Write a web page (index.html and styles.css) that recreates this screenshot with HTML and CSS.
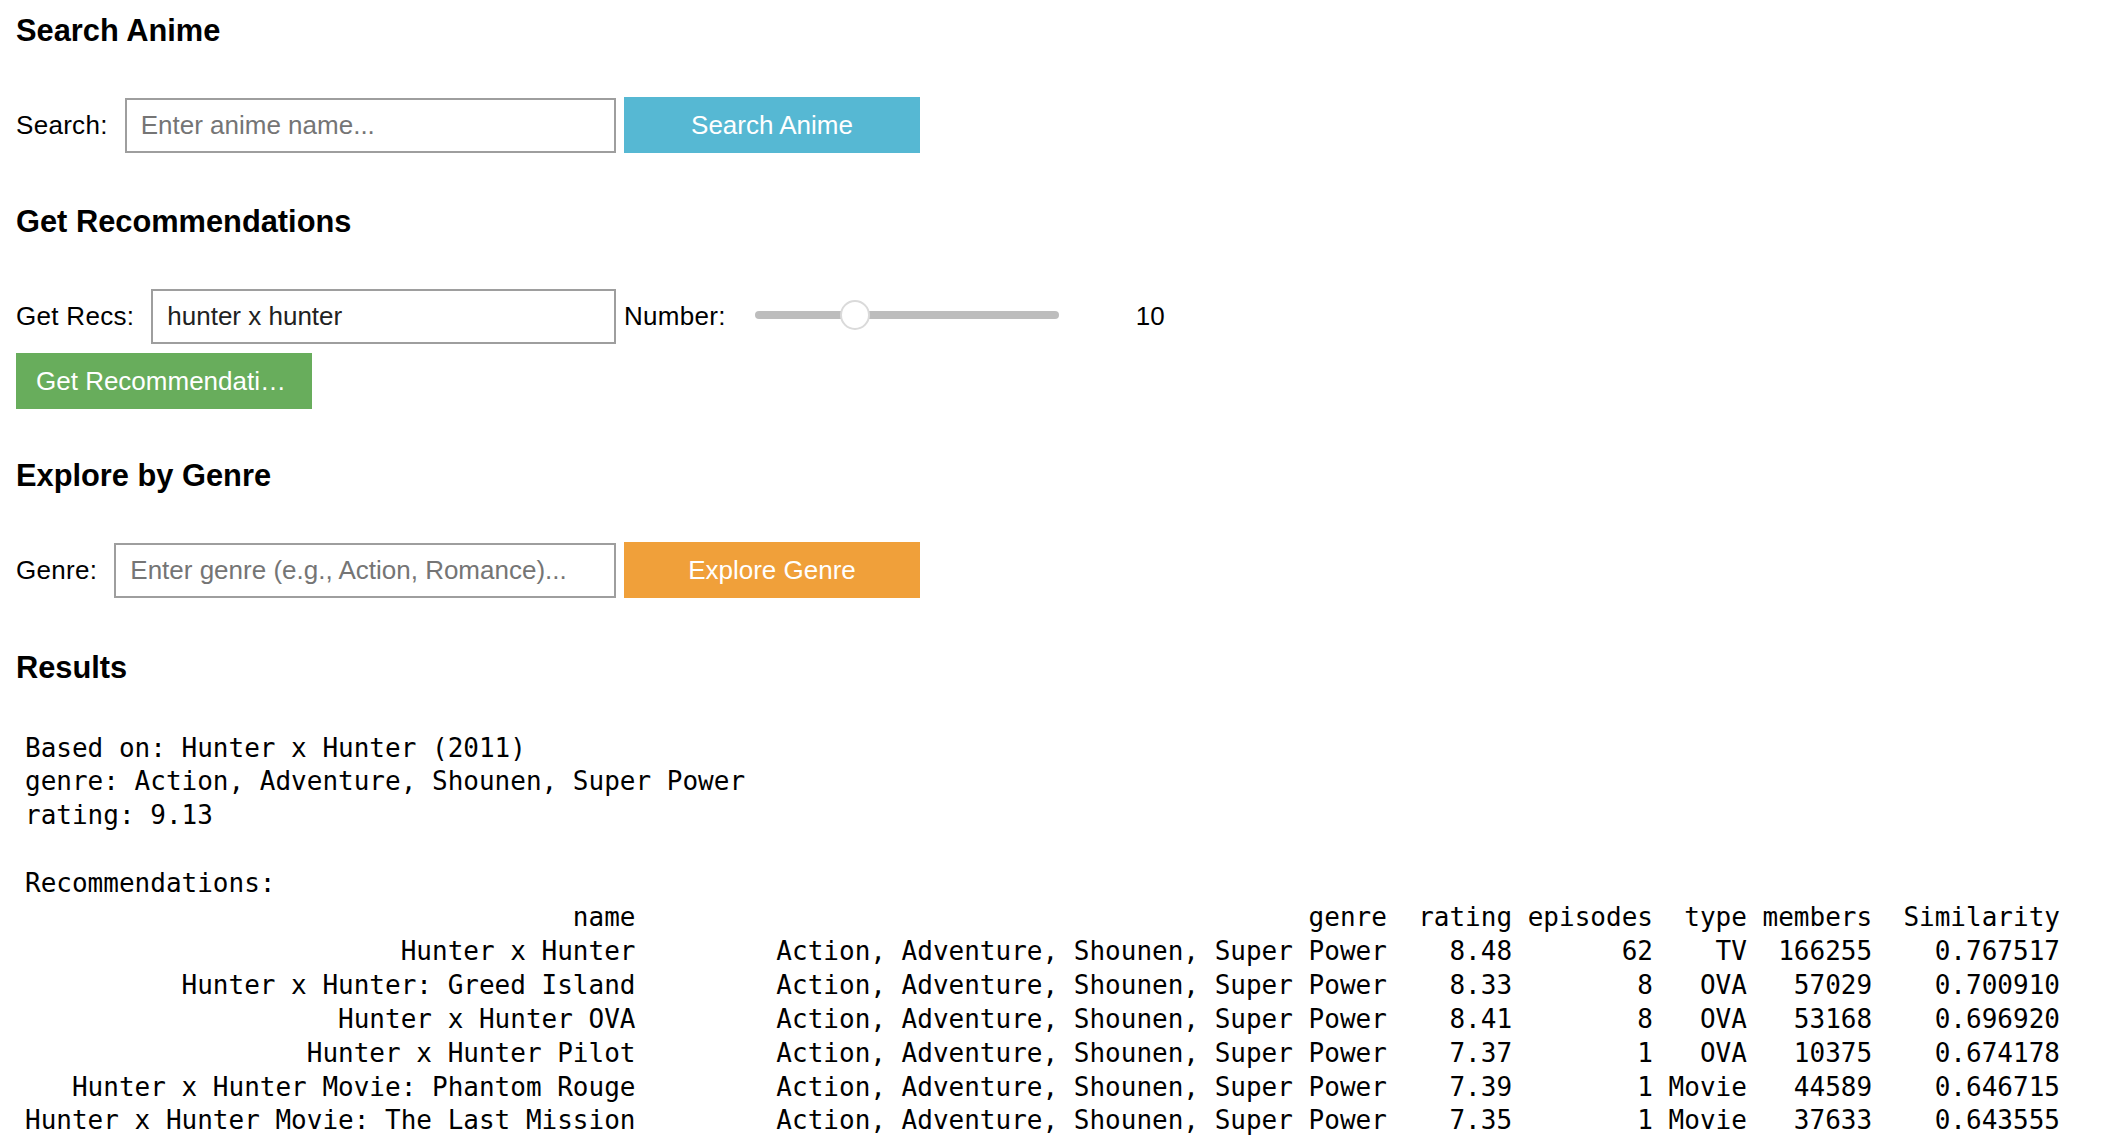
FILE: index.html
```html
<!DOCTYPE html>
<html lang="en">
<head>
<meta charset="utf-8">
<title>Anime Recommender</title>
<link rel="stylesheet" href="styles.css">
</head>
<body>
<main class="page">
  <section class="sec sec-search">
    <h3 class="title">Search Anime</h3>
    <div class="row">
      <label class="field"><span class="lbl">Search:</span><input class="txt" type="text" placeholder="Enter anime name..."></label>
      <button class="btn btn-info"><span class="btn-text">Search Anime</span></button>
    </div>
  </section>

  <section class="sec sec-recs">
    <h3 class="title">Get Recommendations</h3>
    <div class="row">
      <label class="field"><span class="lbl">Get Recs:</span><input class="txt" type="text" value="hunter x hunter"></label>
      <span class="lbl num-lbl">Number:</span>
      <input class="slider" type="range" min="1" max="30" value="10">
      <span class="readout">10</span>
    </div>
    <button class="btn btn-success"><span class="btn-text">Get Recommendations</span></button>
  </section>

  <section class="sec sec-genre">
    <h3 class="title">Explore by Genre</h3>
    <div class="row">
      <label class="field"><span class="lbl">Genre:</span><input class="txt" type="text" placeholder="Enter genre (e.g., Action, Romance)..."></label>
      <button class="btn btn-warning"><span class="btn-text">Explore Genre</span></button>
    </div>
  </section>

  <section class="sec sec-results">
    <h3 class="title">Results</h3>
<pre class="output">Based on: Hunter x Hunter (2011)
genre: Action, Adventure, Shounen, Super Power
rating: 9.13

Recommendations:
                                   name                                           genre  rating episodes  type members  Similarity
                        Hunter x Hunter         Action, Adventure, Shounen, Super Power    8.48       62    TV  166255    0.767517
          Hunter x Hunter: Greed Island         Action, Adventure, Shounen, Super Power    8.33        8   OVA   57029    0.700910
                    Hunter x Hunter OVA         Action, Adventure, Shounen, Super Power    8.41        8   OVA   53168    0.696920
                  Hunter x Hunter Pilot         Action, Adventure, Shounen, Super Power    7.37        1   OVA   10375    0.674178
   Hunter x Hunter Movie: Phantom Rouge         Action, Adventure, Shounen, Super Power    7.39        1 Movie   44589    0.646715
Hunter x Hunter Movie: The Last Mission         Action, Adventure, Shounen, Super Power    7.35        1 Movie   37633    0.643555</pre>
  </section>
</main>
</body>
</html>
```

FILE: styles.css
```css
* {
  box-sizing: border-box;
}

html,
body {
  margin: 0;
  padding: 0;
  background: #ffffff;
}

body {
  font-family: "Liberation Sans", Arial, Helvetica, sans-serif;
  font-size: 26px;
  color: #000000;
}

.page {
  padding: 16px 16px 0 16px;
}

.title {
  font-size: 30.8px;
  line-height: 30px;
  font-weight: 700;
  margin: 0 0 51px 0;
}

.sec-recs {
  margin-top: 54px;
}

.sec-genre {
  margin-top: 52px;
}

.sec-results {
  margin-top: 55px;
}

.sec-results .title {
  margin-bottom: 48.5px;
}

.row {
  display: flex;
  align-items: center;
  height: 56px;
}

.field {
  display: flex;
  align-items: center;
  width: 600px;
  gap: 17px;
}

.lbl {
  white-space: nowrap;
  line-height: 30px;
  letter-spacing: 0.3px;
}

.txt {
  flex: 1;
  min-width: 0;
  height: 55px;
  margin: 0;
  padding: 0 14px;
  border: 2px solid #9e9e9e;
  border-radius: 0;
  background: #ffffff;
  font: inherit;
  color: #222222;
  outline: none;
}

.txt::placeholder {
  color: #757575;
  opacity: 1;
}

.btn {
  display: block;
  width: 296px;
  height: 56px;
  margin: 0 0 0 8px;
  padding: 0 20px;
  border: 0;
  border-radius: 0;
  font: inherit;
  color: #ffffff;
  cursor: pointer;
}

.btn-text {
  display: block;
  width: 100%;
  overflow: hidden;
  white-space: nowrap;
  text-overflow: ellipsis;
  text-align: center;
  line-height: 30px;
}

.btn-info {
  background: #56b8d3;
}

.btn-success {
  background: #68ad5c;
  margin: 9px 0 0 0;
}

.btn-warning {
  background: #f0a03a;
}

.num-lbl {
  margin-left: 8px;
}

.slider {
  -webkit-appearance: none;
  appearance: none;
  width: 304px;
  height: 30px;
  margin: 0 0 2px 29px;
  padding: 0;
  background: transparent;
}

.slider::-webkit-slider-runnable-track {
  height: 8px;
  background: #bdbdbd;
  border-radius: 4px;
}

.slider::-webkit-slider-thumb {
  -webkit-appearance: none;
  appearance: none;
  box-sizing: border-box;
  width: 30px;
  height: 30px;
  margin-top: -11px;
  border-radius: 50%;
  background: #ffffff;
  border: 2px solid #dadada;
}

.readout {
  margin-left: 77px;
  line-height: 30px;
}

.output {
  margin: 0;
  padding: 0 0 0 9px;
  font-family: "DejaVu Sans Mono", "Liberation Mono", monospace;
  font-size: 26px;
  line-height: 33.9px;
  color: #000000;
  white-space: pre;
}
```
